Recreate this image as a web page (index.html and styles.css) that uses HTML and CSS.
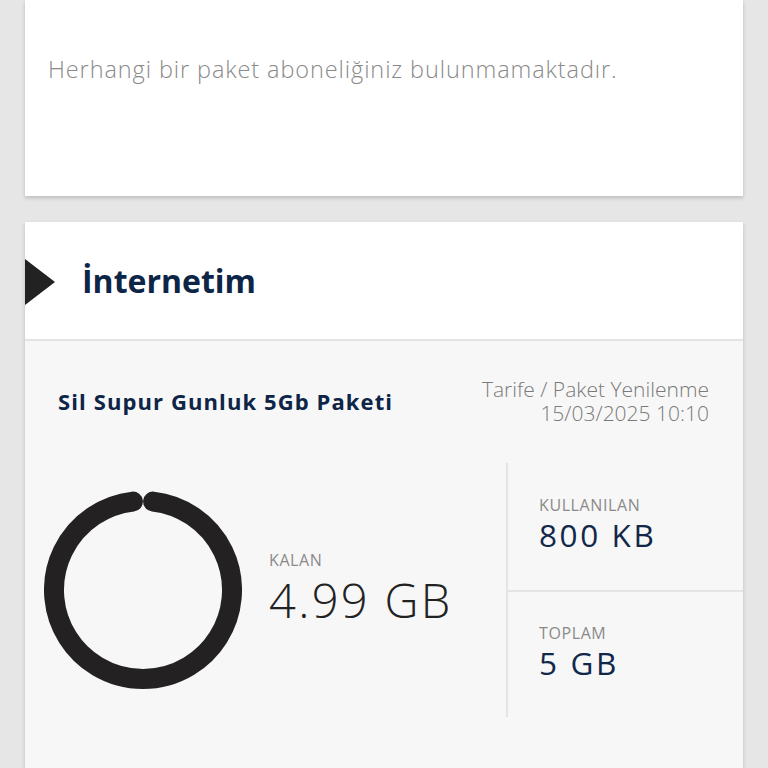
FILE: index.html
```html
<!DOCTYPE html>
<html lang="tr">
<head>
<meta charset="utf-8">
<link rel="stylesheet" href="styles.css">
</head>
<body>
<div class="page">
  <section class="card card-empty">
    <p class="empty-text">Herhangi bir paket aboneliğiniz bulunmamaktadır.</p>
  </section>
  <section class="card card-internet">
    <header class="card-head">
      <span class="marker"></span>
      <h2 class="title">İnternetim</h2>
    </header>
    <div class="card-body">
      <div class="pkg-row">
        <div class="pkg-name">Sil Supur Gunluk 5Gb Paketi</div>
        <div class="pkg-renew">
          <div>Tarife / Paket Yenilenme</div>
          <div>15/03/2025 10:10</div>
        </div>
      </div>
      <div class="stats">
        <div class="main-stat">
          <svg class="ring" width="198" height="198" viewBox="0 0 198 198">
            <path d="M109.08 10.57 A89 89 0 1 1 88.92 10.57" fill="none" stroke="#232122" stroke-width="20" stroke-linecap="round"/>
          </svg>
          <div class="remain">
            <div class="label">KALAN</div>
            <div class="big">4.99 GB</div>
          </div>
        </div>
        <div class="side">
          <div class="side-cell">
            <div class="label">KULLANILAN</div>
            <div class="mid">800 KB</div>
          </div>
          <div class="side-cell side-cell-bottom">
            <div class="label">TOPLAM</div>
            <div class="mid">5 GB</div>
          </div>
        </div>
      </div>
    </div>
  </section>
</div>
</body>
</html>
```

FILE: styles.css
```css
html, body {
  margin: 0;
  padding: 0;
  background: #e6e6e6;
  font-family: "Open Sans", Lato, sans-serif;
  height: 768px;
  overflow: hidden;
}
.page {
  padding: 0 25px;
  display: flex;
  flex-direction: column;
  gap: 26px;
}
.card {
  background: #fff;
  box-shadow: 0 2px 4px rgba(0,0,0,0.18);
}
.card-empty {
  height: 196px;
  box-sizing: border-box;
  padding: 53px 23px 0;
}
.empty-text {
  margin: 0;
  font-size: 23.5px;
  font-weight: 300;
  color: #8a8a8a;
  line-height: 32px;
  letter-spacing: 0.9px;
}
.card-head {
  height: 117px;
  display: flex;
  align-items: center;
  border-bottom: 2px solid #e4e4e4;
}
.marker {
  width: 0;
  height: 0;
  border-top: 23px solid transparent;
  border-bottom: 23px solid transparent;
  border-left: 30px solid #222;
  margin-top: 2px;
}
.title {
  margin: 0 0 0 27px;
  font-size: 32px;
  font-weight: 700;
  color: #0d2546;
}
.card-body {
  background: #f7f7f7;
  height: 440px;
}
.pkg-row {
  display: flex;
  justify-content: space-between;
  align-items: center;
  padding: 36px 34px 0 33px;
}
.pkg-name {
  font-size: 22px;
  font-weight: 700;
  color: #0d2546;
  letter-spacing: 1.1px;
}
.pkg-renew {
  text-align: right;
  font-size: 21px;
  font-weight: 300;
  color: #7a7a7a;
  line-height: 24px;
}
.stats {
  display: flex;
  margin-top: 38px;
}
.main-stat {
  flex: 1;
  display: flex;
  align-items: center;
  padding-left: 19px;
  gap: 27px;
}
.ring {
  display: block;
}
.label {
  font-size: 16px;
  line-height: 20px;
  color: #8a8a8a;
  letter-spacing: 0.6px;
}
.big {
  font-size: 47px;
  font-weight: 300;
  color: #222;
  line-height: 60px;
  letter-spacing: 2.3px;
}
.side {
  width: 235px;
  border-left: 2px solid #e4e4e4;
  display: flex;
  flex-direction: column;
}
.side-cell {
  height: 127px;
  box-sizing: border-box;
  padding: 32px 0 0 31px;
}
.side-cell-bottom {
  border-top: 2px solid #e4e4e4;
  padding-top: 31px;
}
.mid {
  font-size: 31.5px;
  color: #12284a;
  line-height: 40px;
  letter-spacing: 2.6px;
}
```
